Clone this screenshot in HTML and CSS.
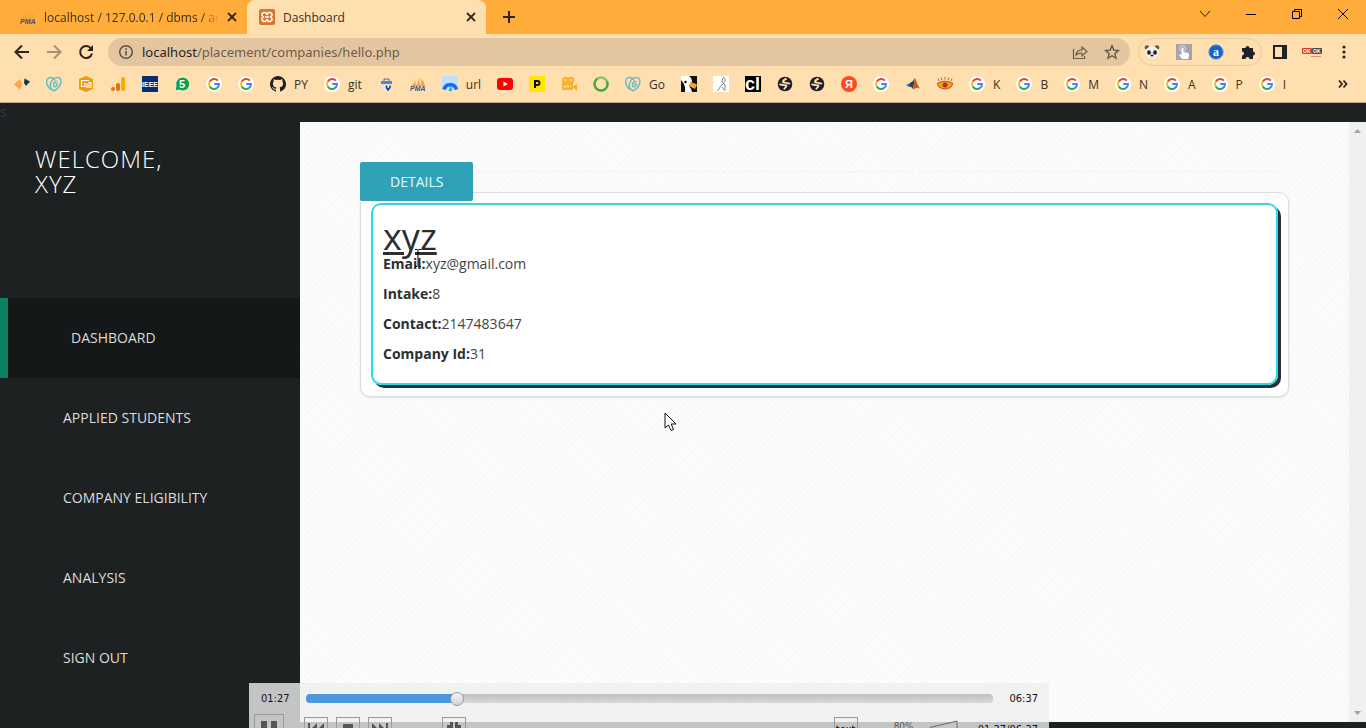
FILE: index.html
```html
<!DOCTYPE html>
<html lang="en">
<head>
    <meta charset="UTF-8">
    <meta name="viewport" content="width=device-width, initial-scale=1.0">
    <title>Dashboard</title>
    <link rel="stylesheet" href="styles.css">
</head>
<body>
    <!-- shared icons -->
    <svg class="sprite" aria-hidden="true">
        <symbol id="google" viewBox="0 0 16 16">
            <circle cx="8" cy="8" r="8" fill="#fff"/>
            <path d="M11.9 4.7A5 5 0 0 0 3.7 5.6" fill="none" stroke="#ea4335" stroke-width="2"/>
            <path d="M3.7 5.5A5 5 0 0 0 3.7 10.5" fill="none" stroke="#fbbc05" stroke-width="2"/>
            <path d="M3.7 10.4A5 5 0 0 0 11.2 11.9" fill="none" stroke="#34a853" stroke-width="2"/>
            <path d="M8.2 8H13A5 5 0 0 1 11.1 12" fill="none" stroke="#4285f4" stroke-width="2"/>
        </symbol>
        <symbol id="godaddy" viewBox="0 0 16 16">
            <g fill="none" stroke="#65bfc4" stroke-width="1.5">
                <path d="M5 13.500C0 10 -.5 4 2.500 2 5 .5 8 2 9 4.500"/>
                <path d="M8 14.800C4.500 13 3.500 9.500 5 6 7 2 11 .5 13.500 2 16 4 15.500 11 8 14.800z"/>
                <path d="M11.500 5.500C9 5 7 7.500 7.500 9.800 8.500 11.500 11 10.500 11.300 8H9.500"/>
            </g>
        </symbol>
        <symbol id="pma" viewBox="0 0 16 16">
            <path d="M1 10Q5 8 5 3L6 10zM5.500 10Q9 7 8.500 1L10.500 10zM10.500 10Q12 7 10.500 2 14 5 15 10z" fill="#f8a23c"/>
            <text x="0" y="15" class="pma-text">PMA</text>
        </symbol>
        <symbol id="globe" viewBox="0 0 16 16">
            <circle cx="8" cy="8" r="7.300" fill="#202124"/>
            <path d="M2.500 8.500C5 8.300 6.500 9.500 9.500 9.500 9.500 11.500 7.500 11.500 7 13.500M9.500 2.500C8.500 3.500 5.500 4 6 6 8 7.300 11 6.500 13 8" fill="none" stroke="#ffdfb0" stroke-width="1.800"/>
        </symbol>
        <symbol id="close" viewBox="0 0 10 10">
            <path d="M1 1L9 9M9 1L1 9" stroke="#35291a" stroke-width="1.800"/>
        </symbol>
    </svg>

    <header class="browser">
        <div class="tab-strip">
            <div class="tab">
                <svg class="icon" viewBox="0 0 16 16"><use href="#pma"/></svg>
                <span class="tab-title faded">localhost / 127.0.0.1 / dbms / adm</span>
                <button class="tab-close" aria-label="Close tab"><svg width="10" height="10"><use href="#close"/></svg></button>
            </div>
            <div class="tab active">
                <svg class="icon" viewBox="0 0 16 16">
                    <rect width="16" height="16" rx="2" fill="#e0712b"/>
                    <path d="M4.500 3.500H6.500L8 5.500 9.500 3.500H11.500L13 5V6.500L11.500 8 13 9.500V11L11.500 12.500H9.500L8 10.500 6.500 12.500H4.500L3 11V9.500L4.500 8 3 6.500V5z" fill="none" stroke="#fff" stroke-width="1.600" stroke-linejoin="round"/>
                    <path d="M6 8H10" stroke="#fff" stroke-width="1.500"/>
                </svg>
                <span class="tab-title">Dashboard</span>
                <button class="tab-close" aria-label="Close tab"><svg width="10" height="10"><use href="#close"/></svg></button>
            </div>
            <button class="new-tab" aria-label="New tab"><svg width="12" height="12"><path d="M6 0V12M0 6H12" stroke="#2c2010" stroke-width="2"/></svg></button>
            <div class="window-controls">
                <button aria-label="Search tabs"><svg width="12" height="12"><path d="M1 3L6 8.500 11 3" fill="none" stroke="#2c2010"/></svg></button>
                <button aria-label="Minimize"><svg width="12" height="12"><path d="M1 6.500H11" stroke="#000"/></svg></button>
                <button aria-label="Restore"><svg width="12" height="12"><path d="M1.500 3.500H8.500V10.500H1.500zM3.500 3.500V1.500H10.500V8.500H8.500" fill="none" stroke="#000"/></svg></button>
                <button aria-label="Close"><svg width="12" height="12"><path d="M1 1L11 11M11 1L1 11" stroke="#000"/></svg></button>
            </div>
        </div>

        <div class="toolbar">
            <button class="tool" aria-label="Back"><svg class="icon" viewBox="0 0 16 16"><path d="M15 8H2M8 1.500L1.500 8 8 14.500" fill="none" stroke="#2b241b" stroke-width="2"/></svg></button>
            <button class="tool" aria-label="Forward"><svg class="icon" viewBox="0 0 16 16"><path d="M1 8H14M8 1.500L14.500 8 8 14.500" fill="none" stroke="#a98f70" stroke-width="2"/></svg></button>
            <button class="tool" aria-label="Reload"><svg class="icon" viewBox="0 0 16 16"><path d="M13 4.500A6 6 0 1 0 14 9.500" fill="none" stroke="#2b241b" stroke-width="2"/><path d="M15 1V7H9z" fill="#2b241b"/></svg></button>
            <div class="omnibox">
                <svg class="icon" viewBox="0 0 16 16"><circle cx="8" cy="8" r="6.300" fill="none" stroke="#5d5141" stroke-width="1.500"/><path d="M8 7V11.500M8 4.300V6" stroke="#5d5141" stroke-width="1.600"/></svg>
                <div class="url" role="textbox" aria-label="Address">localhost<span>/placement/companies/hello.php</span></div>
                <button class="box-button" aria-label="Share"><svg class="icon" viewBox="0 0 16 16"><path d="M1.500 5V14.500H12.500V12M4 11Q4.500 6 10 5.800V3L15 7.500 10 12V9.200Q6 9 4 11z" fill="none" stroke="#6d5e4b" stroke-width="1.200"/></svg></button>
                <button class="box-button" aria-label="Bookmark"><svg class="icon" viewBox="0 0 16 16"><path d="M8 1.700L9.800 6.100 14.500 6.500 10.900 9.600 12 14.200 8 11.700 4 14.200 5.100 9.600 1.500 6.500 6.200 6.100z" fill="none" stroke="#5d5141" stroke-width="1.300"/></svg></button>
            </div>
            <div class="extensions">
                <button aria-label="Panda"><svg class="icon" viewBox="0 0 16 16">
                    <circle cx="3" cy="3.500" r="2.300" fill="#555"/><circle cx="13" cy="3.500" r="2.300" fill="#555"/>
                    <ellipse cx="8" cy="8.500" rx="6.800" ry="6.200" fill="#eee"/>
                    <ellipse cx="5" cy="8.500" rx="1.800" ry="2.200" fill="#222"/><ellipse cx="11" cy="8.500" rx="1.800" ry="2.200" fill="#222"/>
                    <ellipse cx="8" cy="11.500" rx="1.500" ry="1" fill="#222"/></svg></button>
                <button aria-label="Touch"><svg class="icon" viewBox="0 0 16 16"><rect width="16" height="16" fill="#a3a5a8"/><circle cx="6.500" cy="4.500" r="3" fill="none" stroke="#ddd"/><path d="M5.500 4Q6.500 2.500 7.500 4V8L12 9Q13.500 9.500 13 12L12 15H6L3 11Q3 9.500 5.500 11z" fill="#fff"/></svg></button>
                <button aria-label="Alexa"><svg class="icon" viewBox="0 0 16 16"><circle cx="8" cy="8" r="7.200" fill="#1265c4" stroke="#6b9bd0"/><text x="8" y="12" class="alexa-text">a</text></svg></button>
                <button aria-label="Extensions"><svg class="icon" viewBox="0 0 16 16"><path d="M2 4H5.500A2 2 0 1 1 9.500 4H13V7.500A2 2 0 1 1 13 11.500V15H9.500A2 2 0 0 0 5.500 15H2V11.500A2 2 0 0 0 2 7.500z" fill="#202124"/></svg></button>
            </div>
            <button class="tool" aria-label="Side panel"><svg class="icon" viewBox="0 0 16 16"><path d="M2 2H14V14H2z" fill="none" stroke="#202124" stroke-width="2"/><path d="M10 2H14V14H10z" fill="#202124"/></svg></button>
            <button class="tool profile" aria-label="Profile"><svg width="20" height="10"><rect y="1" width="10" height="6" rx="1" fill="#dd3b2d"/><rect x="10" y="1" width="10" height="6" rx="1" fill="#4c4b4b"/><text x="1" y="6" class="ok-text">OK</text><text x="11" y="6" class="ok-text">OK</text><path d="M9 9.500H19" stroke="#e68b75"/></svg></button>
            <button class="tool" aria-label="Menu"><svg class="icon" viewBox="0 0 16 16"><g fill="#2b241b"><circle cx="8" cy="3" r="1.600"/><circle cx="8" cy="8" r="1.600"/><circle cx="8" cy="13" r="1.600"/></g></svg></button>
        </div>

        <nav class="bookmarks" aria-label="Bookmarks">
            <a href="#"><svg class="icon" viewBox="0 0 16 16"><path d="M0 8.500L6 3 8 8.500 6 14z" fill="#ffa34d"/><path d="M10.500 2.500L16 5.500 12 10 10 7z" fill="#15393a"/></svg></a>
            <a href="#"><svg class="icon"><use href="#godaddy"/></svg></a>
            <a href="#"><svg class="icon" viewBox="0 0 16 16"><path d="M8 0L15 3V13L8 16 1 13V3z" fill="#ee9a0b"/><path d="M11 4.500H3.500V10.500H7V7.500H5.500M9 12V7.500M11 12V6.500H13V12" fill="none" stroke="#fff" stroke-width="1.200"/></svg></a>
            <a href="#"><svg class="icon" viewBox="0 0 16 16"><circle cx="3" cy="13" r="2" fill="#e8710a"/><rect x="6" y="7" width="4" height="8" rx="2" fill="#e8710a"/><rect x="11" y="1" width="4" height="14" rx="2" fill="#f9ab00"/></svg></a>
            <a href="#"><svg class="icon" viewBox="0 0 16 16"><rect width="16" height="16" fill="#062d70"/><text x="8" y="11" class="ieee-text">IEEE</text></svg></a>
            <a href="#"><svg class="icon" viewBox="0 0 16 16"><path d="M1 15L2 10A7 7 0 1 1 5 14z" fill="#0aa34c" stroke="#fff" stroke-width=".8"/><text x="8" y="12" class="five-text">5</text></svg></a>
            <a href="#"><svg class="icon"><use href="#google"/></svg></a>
            <a href="#"><svg class="icon"><use href="#google"/></svg></a>
            <a href="#"><svg class="icon" viewBox="0 0 16 16"><path d="M8 0A8 8 0 0 0 5.500 15.600C5.900 15.700 6 15.400 6 15.200V13.700C3.800 14.200 3.300 12.800 3.300 12.800 2.900 11.900 2.400 11.600 2.400 11.600 1.700 11.100 2.500 11.100 2.500 11.100 3.300 11.200 3.700 11.900 3.700 11.900 4.400 13.100 5.600 12.800 6 12.600 6.100 12 6.300 11.700 6.500 11.500 4.700 11.300 2.900 10.600 2.900 7.600 2.900 6.700 3.200 6 3.700 5.400 3.600 5.200 3.300 4.400 3.800 3.300 3.800 3.300 4.500 3.100 6 4.100A7.600 7.600 0 0 1 10 4.100C11.500 3.100 12.200 3.300 12.200 3.300 12.700 4.400 12.400 5.200 12.300 5.400 12.800 6 13.100 6.700 13.100 7.600 13.100 10.600 11.300 11.300 9.500 11.500 9.800 11.700 10 12.200 10 13V15.200C10 15.400 10.100 15.700 10.500 15.600A8 8 0 0 0 8 0z" fill="#202124"/></svg><span>PY</span></a>
            <a href="#"><svg class="icon"><use href="#google"/></svg><span>git</span></a>
            <a href="#"><svg class="icon" viewBox="0 0 16 16"><path d="M6 5V3H11V5" fill="none" stroke="#667"/><rect x="3" y="5" width="11" height="3" fill="#4c86dc"/><rect x="4" y="8" width="9" height="7" fill="#dfe6ee"/><path d="M8.500 9.500V11.500L10 14 12 11.500V9.500" fill="none" stroke="#334" stroke-width="1.500"/></svg></a>
            <a href="#"><svg class="icon"><use href="#pma"/></svg></a>
            <a href="#"><svg class="icon" viewBox="0 0 16 16"><rect width="16" height="14" fill="#bfe0ff"/><path d="M2 13.500A6.500 6.500 0 0 1 14.500 13.500" fill="none" stroke="#1769f2" stroke-width="3.500"/><path d="M6.500 15L9 9.500 10 15z" fill="#209cf5"/></svg><span>url</span></a>
            <a href="#"><svg class="icon" viewBox="0 0 16 16"><rect y="2" width="16" height="12" rx="3" fill="#f00"/><path d="M6.500 5.500L11 8 6.500 10.500z" fill="#fff"/></svg></a>
            <a href="#"><svg class="icon" viewBox="0 0 16 16"><rect width="16" height="16" fill="#ffe600"/><path d="M6 12V5H8.500A1.800 1.800 0 0 1 8.500 9H6" fill="none" stroke="#111" stroke-width="2"/></svg></a>
            <a href="#"><svg class="icon" viewBox="0 0 16 16"><g fill="#fcb12b"><circle cx="4.500" cy="4" r="3.300"/><circle cx="10" cy="4" r="3.300"/><rect x="1" y="6" width="11" height="8" rx="1"/><path d="M11 10.500L16 8V15z"/></g><circle cx="4.500" cy="4" r="1" fill="#ffdfb0"/><circle cx="10" cy="4" r="1" fill="#ffdfb0"/><path d="M3 10.500H10" stroke="#ffdfb0" stroke-width="2" stroke-dasharray="2 1"/></svg></a>
            <a href="#"><svg class="icon" viewBox="0 0 16 16"><circle cx="8" cy="8" r="6.500" fill="none" stroke="#8fc16d" stroke-width="2.500"/><path d="M4 3A6.500 6.500 0 1 0 14 5.500" fill="none" stroke="#43a338" stroke-width="2"/></svg></a>
            <a href="#"><svg class="icon"><use href="#godaddy"/></svg><span>Go</span></a>
            <a href="#"><svg class="icon" viewBox="0 0 16 16"><rect width="16" height="16" fill="#111"/><path d="M0 0H8Q11 2 11 6L8 10Q10 12 11 16H4Q5 9 0 4z" fill="#fff"/><path d="M9 6.500Q15 7 16 9L14 13 8 10z" fill="#f6a52c"/><circle cx="4.500" cy="6" r="1.200"/></svg></a>
            <a href="#"><svg class="icon" viewBox="0 0 16 16"><rect width="16" height="16" fill="#fff"/><path d="M10 1Q13 2 12 5 9 7 12 9L12 15M10 2Q8 6 10 7M10 8Q7 10 6 13L4 15M9 11L11 14" fill="none" stroke="#888"/></svg></a>
            <a href="#"><svg class="icon" viewBox="0 0 16 16"><rect width="16" height="16"/><text x="0" y="14" class="cl-text">cl</text></svg></a>
            <a href="#"><svg class="icon"><use href="#globe"/></svg></a>
            <a href="#"><svg class="icon"><use href="#globe"/></svg></a>
            <a href="#"><svg class="icon" viewBox="0 0 16 16"><circle cx="8" cy="8" r="8" fill="#fc4b20"/><text x="8" y="12" class="ya-text">Я</text></svg></a>
            <a href="#"><svg class="icon"><use href="#google"/></svg></a>
            <a href="#"><svg class="icon" viewBox="0 0 16 16"><path d="M1 9L5 7 7 9 4 11z" fill="#3c77b5"/><path d="M5 7Q8 6 10 2L8 13Q6 10 4 11z" fill="#27435e"/><path d="M10 2Q12 8 15 13 12 10 8 14z" fill="#d95319"/></svg></a>
            <a href="#"><svg class="icon" viewBox="0 0 16 16"><path d="M0 7.500Q8 3 16 7.500L14 11Q8 15 2 11z" fill="#f5a11c" stroke="#c94d20"/><circle cx="8" cy="9" r="2.500" fill="#a63a1b"/><path d="M2 5L1 2.500M5 4L4 1.500M8 3.500V1M11 4L12 1.500M14 5L15 2.500" stroke="#cf542a"/></svg></a>
            <a href="#"><svg class="icon"><use href="#google"/></svg><span>K</span></a>
            <a href="#"><svg class="icon"><use href="#google"/></svg><span>B</span></a>
            <a href="#"><svg class="icon"><use href="#google"/></svg><span>M</span></a>
            <a href="#"><svg class="icon"><use href="#google"/></svg><span>N</span></a>
            <a href="#"><svg class="icon"><use href="#google"/></svg><span>A</span></a>
            <a href="#"><svg class="icon"><use href="#google"/></svg><span>P</span></a>
            <a href="#"><svg class="icon"><use href="#google"/></svg><span>I</span></a>
            <button class="more" aria-label="More bookmarks"><svg width="10" height="10"><path d="M1 1.500L4 5 1 8.500M5.500 1.500L8.500 5 5.500 8.500" fill="none" stroke="#2b241b" stroke-width="1.800"/></svg></button>
        </nav>
    </header>

    <div class="stray">s</div>

    <div class="page">
        <aside class="sidebar">
            <h2>Welcome,<br>xyz</h2>
            <ul class="menu">
                <li><a class="active" href="#">Dashboard</a></li>
                <li><a href="#">Applied Students</a></li>
                <li><a href="#">Company Eligibility</a></li>
                <li><a href="#">Analysis</a></li>
                <li><a href="#">Sign Out</a></li>
            </ul>
        </aside>
        <main class="content">
            <div class="tab-row">
                <button class="details-tab">DETAILS</button>
                <div class="tab-line"></div>
            </div>
            <section class="panel">
                <div class="card">
                    <h1>xyz</h1>
                    <p><b>Email:</b>xyz@gmail.com</p>
                    <p><b>Intake:</b>8</p>
                    <p><b>Contact:</b>2147483647</p>
                    <p><b>Company Id:</b>31</p>
                </div>
            </section>
        </main>
        <div class="scrollbar">
            <svg width="7" height="4"><path d="M0 4L3.500 0 7 4z" fill="#a3a3a3"/></svg>
            <svg width="7" height="4"><path d="M0 0L3.500 4 7 0z" fill="#a3a3a3"/></svg>
        </div>
    </div>

    <div class="player">
        <div class="seek-row">
            <span>01:27</span>
            <input type="range" class="seek" min="0" max="397" value="85" aria-label="Seek">
            <span>06:37</span>
        </div>
        <div class="control-row">
            <button class="pause" aria-label="Pause"><svg width="16" height="16"><path d="M0 0H6V16H0zM10 0H16V16H10z"/></svg></button>
            <div class="group">
                <button aria-label="Previous"><svg width="16" height="12"><path d="M0 0H2V12H0zM9 0V12L3 6zM16 0V12L10 6z"/></svg></button>
                <button aria-label="Stop"><svg width="10" height="10"><path d="M0 0H10V10H0z"/></svg></button>
                <button aria-label="Next"><svg width="16" height="12"><path d="M14 0H16V12H14zM7 0V12L13 6zM0 0V12L6 6z"/></svg></button>
            </div>
            <button class="full" aria-label="Fullscreen"><svg width="14" height="14"><path d="M3 0H6V6H0V3H3zM8 0H11V3H14V6H8zM0 8H6V14H3V11H0zM8 8H14V11H11V14H8z"/></svg></button>
            <button class="text" aria-label="Subtitles">text</button>
            <span class="volume-label">80%</span>
            <svg class="volume" width="28" height="14"><path d="M0 7.500L27 1V13" fill="none" stroke="#666"/></svg>
            <span class="clock">01:27/06:37</span>
        </div>
    </div>

    <svg class="pointer" width="14" height="20"><path d="M1 1V16L4.500 13 7 18.500 9.500 17.500 7.200 12H12z" fill="#fff" stroke="#111"/></svg>
    <svg class="caret" width="8" height="18"><path d="M1 .5H3.500M4.500 .5H7M4 1V17M1 17.500H3.500M4.500 17.500H7" stroke="#000"/></svg>
</body>
</html>
```

FILE: styles.css
```css
* {
    box-sizing: border-box;
}
body {
    margin: 0;
    height: 100vh;
    display: flex;
    flex-direction: column;
    position: relative;
    overflow: hidden;
    background: #1d2122;
    font-family: "Open Sans", "Noto Sans", sans-serif;
    font-size: 14px;
    color: #2b2f31;
}
button {
    border: none;
    background: none;
    padding: 0;
    font: inherit;
    color: inherit;
    display: flex;
    align-items: center;
    justify-content: center;
}
a {
    color: inherit;
    text-decoration: none;
}
svg {
    display: block;
    flex: none;
}
.sprite {
    position: absolute;
    width: 0;
    height: 0;
}
.icon {
    width: 16px;
    height: 16px;
}

/* browser window */
.browser {
    flex: none;
    background: #ffdfb0;
    border-bottom: 1px solid #b9a88d;
    font-size: 12px;
    color: #3c3022;
}
.tab-strip {
    display: flex;
    height: 34px;
    background: #ffac3a;
}
.tab {
    width: 247px;
    display: flex;
    align-items: center;
    padding: 0 10px 0 20px;
    gap: 8px;
}
.tab.active {
    width: 239px;
    padding: 0 10px 0 12px;
    background: #ffdfb0;
    border-radius: 8px 8px 0 0;
}
.tab-title {
    flex: 1;
    min-width: 0;
    white-space: nowrap;
    overflow: hidden;
}
.faded {
    -webkit-mask-image: linear-gradient(90deg, #000 90%, transparent);
    mask-image: linear-gradient(90deg, #000 90%, transparent);
}
.tab-close {
    width: 10px;
    height: 10px;
}
.new-tab {
    width: 46px;
}
.window-controls {
    display: flex;
    height: 28px;
    margin-left: auto;
}
.window-controls button {
    width: 46px;
}
.toolbar {
    display: flex;
    align-items: center;
    height: 36px;
    padding: 0 6px;
}
.tool {
    width: 32px;
    height: 28px;
}
.omnibox {
    flex: 1;
    display: flex;
    align-items: center;
    height: 28px;
    margin: 0 8px 0 6px;
    padding: 0 10px;
    gap: 8px;
    border-radius: 14px;
    background: #e3c5a0;
}
.url {
    flex: 1;
    font-family: "Noto Sans", "Open Sans", sans-serif;
    font-size: 13px;
    color: #2b241b;
}
.url span {
    color: #6d5e4b;
}
.box-button {
    width: 16px;
    margin-left: 8px;
}
.extensions {
    display: flex;
    align-items: center;
    height: 28px;
    padding: 0 5px;
    gap: 16px;
    border: 1px solid #eccb9d;
    border-radius: 14px;
    margin-right: 2px;
}
.bookmarks {
    display: flex;
    align-items: center;
    height: 32px;
    padding: 0 18px 4px 14px;
    gap: 16px;
}
.bookmarks a {
    display: flex;
    align-items: center;
    gap: 8px;
    height: 20px;
}
.more {
    margin-left: auto;
}
.pma-text {
    font: italic bold 7px "Liberation Sans", sans-serif;
    fill: #4a4a75;
}
.alexa-text {
    font: bold 12px "Liberation Serif", serif;
    fill: #fff;
    text-anchor: middle;
}
.ok-text {
    font: bold 5px "Liberation Sans", sans-serif;
    fill: #fff;
}
.ieee-text {
    font: bold 7px "Liberation Sans", sans-serif;
    fill: #fff;
    text-anchor: middle;
}
.five-text,
.ya-text {
    font: bold 11px "Liberation Sans", sans-serif;
    fill: #fff;
    text-anchor: middle;
}
.cl-text {
    font: bold 18px "Liberation Sans", sans-serif;
    fill: #fff;
}

/* page */
.stray {
    flex: none;
    height: 19px;
    line-height: 18px;
    color: #34393b;
}
.page {
    flex: 1;
    min-height: 0;
    display: flex;
    margin-bottom: 6px;
}
.sidebar {
    width: 300px;
    flex: none;
    color: #fff;
    text-transform: uppercase;
}
.sidebar h2 {
    height: 176px;
    margin: 0;
    padding: 24px 35px;
    font-size: 24px;
    font-weight: 300;
    line-height: 25px;
    letter-spacing: 1px;
}
.menu {
    list-style: none;
    margin: 0;
    padding: 0;
}
.menu a {
    display: block;
    padding-left: 63px;
    line-height: 80px;
    color: #dcdcdc;
}
.menu .active {
    background: #151819;
    border-left: 8px solid #0b8062;
}
.content {
    flex: 1;
    min-width: 0;
    padding: 40px 60px;
    background-color: #fcfcfc;
    background-image:
        repeating-linear-gradient(45deg, rgba(0, 0, 0, 0.012) 0 1px, transparent 1px 4px),
        repeating-linear-gradient(-45deg, rgba(0, 0, 0, 0.01) 0 1px, transparent 1px 5px);
}
.tab-row {
    display: flex;
    position: relative;
    z-index: 1;
}
.details-tab {
    height: 39px;
    padding: 0 30px;
    background: #2fa2b8;
    border-radius: 2px;
    color: #e8fbff;
}
.tab-line {
    flex: 1;
    height: 10px;
    margin-right: 8px;
    border-bottom: 1px solid #f3f3f3;
}
.panel {
    margin-top: -9px;
    padding: 10px;
    background: #fff;
    border: 1px solid #dcdcdc;
    border-radius: 10px;
    box-shadow: 0 1px 2px rgba(0, 0, 0, 0.1);
}
.card {
    padding: 9px 10px;
    border: 2px solid #20dcee;
    border-top-color: #3fd3e0;
    border-radius: 10px;
    box-shadow: 3px 3px #2b2f31;
    margin: 0 0 1px;
}
.card h1 {
    margin: 0;
    font-size: 36px;
    font-weight: 400;
    line-height: 46px;
    height: 40px;
    text-decoration: underline;
}
.card p {
    margin: 0 0 10px;
    line-height: 20px;
    color: #444;
}
.card b {
    font-weight: 700;
    color: #2b2f31;
}
.scrollbar {
    width: 17px;
    display: flex;
    flex-direction: column;
    align-items: center;
    justify-content: space-between;
    padding: 7px 0;
    background: #f0f0f0;
}

/* video controls over the page */
.player {
    position: absolute;
    left: 249px;
    bottom: 0;
    width: 800px;
    height: 45px;
    overflow: hidden;
    background: rgba(238, 239, 239, 0.8);
    font: 11px "DejaVu Sans Condensed", "DejaVu Sans", sans-serif;
    color: #111;
}
.seek-row {
    display: flex;
    align-items: center;
    gap: 16px;
    height: 31px;
    padding: 0 11px 0 12px;
}
.seek {
    flex: 1;
    appearance: none;
    height: 9px;
    margin: 0;
    border-radius: 4px;
    background: linear-gradient(90deg, #4f97dc 22%, transparent 22%), linear-gradient(#c0c0c0, #d8d8d8);
}
.seek::-webkit-slider-thumb {
    appearance: none;
    width: 14px;
    height: 14px;
    border: 1px solid #999;
    border-radius: 50%;
    background: linear-gradient(#f4f4f4, #d4d4d4);
}
.control-row {
    display: flex;
    align-items: flex-start;
    padding: 0 11px 0 5px;
}
.control-row button {
    width: 24px;
    height: 24px;
    margin-top: 3px;
    border: 1px solid #9a9a9a;
    fill: #555;
}
.control-row .pause {
    width: 30px;
    height: 30px;
    margin-top: 0;
}
.group {
    display: flex;
    gap: 8px;
    margin: 0 50px 0 20px;
}
.control-row .text {
    margin-left: auto;
}
.volume-label {
    margin: 8px 16px 0 36px;
    font-size: 10px;
    line-height: 10px;
    color: #555;
}
.volume {
    margin-top: 6px;
}
.clock {
    margin: 10px 0 0 20px;
    line-height: 12px;
}
.pointer {
    position: absolute;
    left: 664px;
    top: 412px;
}
.caret {
    position: absolute;
    left: 414px;
    top: 249px;
}
```
